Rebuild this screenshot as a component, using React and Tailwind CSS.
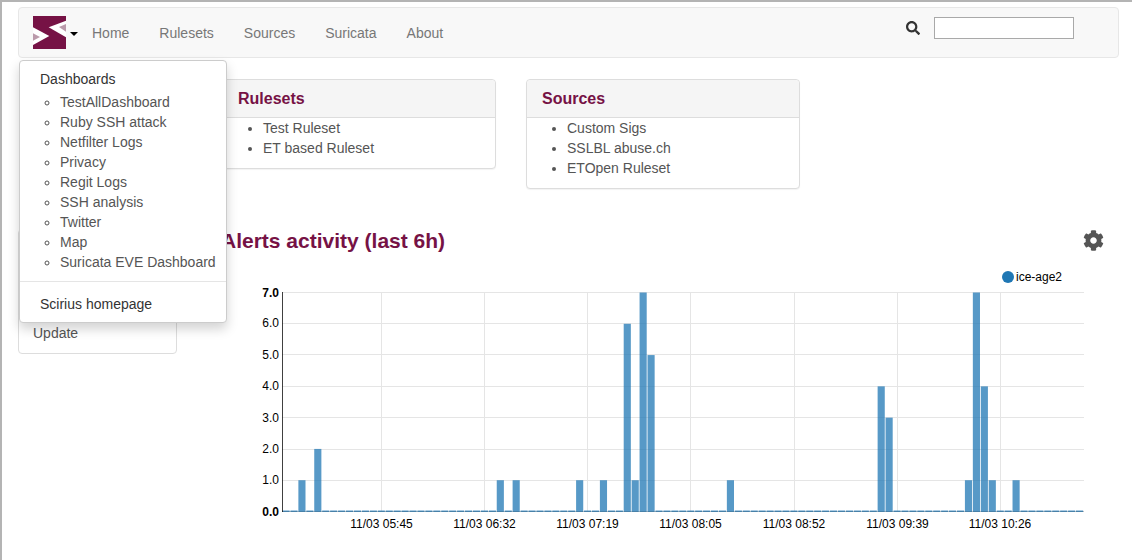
import React from "react";
import { FaCog, FaSearch } from "react-icons/fa";

const font = { fontFamily: '"Liberation Sans", Arial, sans-serif' };
const N = 101;
const STEP = 7.935;
const X0 = 282.1;
const vals = { 2: 1, 4: 2, 27: 1, 29: 1, 37: 1, 40: 1, 43: 6, 44: 1, 45: 7, 46: 5, 56: 1, 75: 4, 76: 3, 86: 1, 87: 7, 88: 4, 89: 1, 92: 1 };
const yTicks = [[7, 292.5, 296.5], [6, 323.5, 327], [5, 354.5, 359], [4, 386.5, 390], [3, 417.5, 422], [2, 449.5, 453], [1, 480.5, 484], [0, 511.5, 516]];
const xTicks = [[381.5, "11/03 05:45", 381.5], [484.5, "11/03 06:32", 484.5], [587.5, "11/03 07:19", 587.5], [690.5, "11/03 08:05", 690.5], [794.5, "11/03 08:52", 794], [897.5, "11/03 09:39", 897.5], [1000.5, "11/03 10:26", 1000]];

function Chart() {
  const yOf = (v) => 511.5 - v * (219 / 7);
  return (
    <svg width="1132" height="300" viewBox="0 260 1132 300" className="block" style={font}>
      {yTicks.map(([v, y]) => (
        <line key={v} x1="282" x2="1084" y1={y} y2={y} stroke="#e5e5e5" strokeWidth="1" />
      ))}
      {xTicks.map(([x]) => (
        <line key={x} x1={x} x2={x} y1="292" y2="512" stroke="#e5e5e5" strokeWidth="1" />
      ))}
      {Array.from({ length: N }).map((_, i) => {
        const v = vals[i] || 0;
        const x = X0 + i * STEP + 0.4;
        const y = v ? yOf(v) : 510.5;
        return <rect key={i} x={x} y={y} width={STEP - 0.8} height={v ? 512 - y : 1.5} fill="#1f77b4" fillOpacity="0.75" />;
      })}
      <line x1="282.5" x2="282.5" y1="292" y2="512" stroke="#000" strokeOpacity="0.75" />
      <line x1="282" x2="1084" y1="511.5" y2="511.5" stroke="#000" strokeOpacity="0.12" />
      {yTicks.map(([v, , ty]) => (
        <text key={v} x="279" y={ty} textAnchor="end" fontSize="12" fill="#000" fontWeight={v === 7 || v === 0 ? 700 : 400}>
          {v.toFixed(1)}
        </text>
      ))}
      {xTicks.map(([, t, lx]) => (
        <text key={t} x={lx} y="527.5" textAnchor="middle" fontSize="12" fill="#000">{t}</text>
      ))}
      <circle cx="1008" cy="277" r="6" fill="#1f77b4" />
      <text x="1016" y="281" fontSize="12" fill="#000">ice-age2</text>
    </svg>
  );
}

function Logo() {
  return (
    <svg width="33" height="33" viewBox="0 0 33 33" className="block">
      <rect width="33" height="33" fill="#761245" />
      <polygon points="33,4.7 15.7,11.3 33,21.3" fill="#fff" />
      <polygon points="33,8 26,11 33,15.7" fill="#bb9aab" />
      <polygon points="0,11.3 16.3,20 0,29" fill="#fff" />
      <polygon points="0,17.3 7,21 0,24.7" fill="#bb9aab" />
    </svg>
  );
}

function Panel({ title, items, className }) {
  return (
    <div className={`border border-[#ddd] rounded bg-white shadow-[0_1px_1px_rgba(0,0,0,0.05)] ${className}`}>
      <div className="h-[38px] px-[15px] flex items-center bg-[#f5f5f5] border-b border-[#ddd] rounded-t">
        <h3 className="text-[16px] font-bold text-[#761245] leading-none">{title}</h3>
      </div>
      <ul className="list-disc pl-[40px] pb-[10px] text-[14px] leading-[20px] text-[#555]">
        {items.map((t) => <li key={t}>{t}</li>)}
      </ul>
    </div>
  );
}

export default function App() {
  const dash = ["TestAllDashboard", "Ruby SSH attack", "Netfilter Logs", "Privacy", "Regit Logs", "SSH analysis", "Twitter", "Map", "Suricata EVE Dashboard"];
  return (
    <div className="relative w-[1132px] h-[560px] overflow-hidden bg-white border-t-2 border-l-2 border-[#b4b4b4]" style={font}>
      <div className="px-4 pt-[5px]">
        <nav className="h-[51px] flex items-center bg-[#f8f8f8] border border-[#e7e7e7] rounded w-[1101px]">
          <div className="pl-[14px] flex items-center">
            <Logo />
            <span className="ml-[4px] mt-[3px] w-0 h-0 border-x-[4px] border-x-transparent border-t-[4px] border-t-black" />
          </div>
          <div className="flex gap-[30px] ml-[14px] text-[14px] text-[#777] mt-[1px]">
            <span>Home</span><span>Rulesets</span><span>Sources</span><span>Suricata</span><span>About</span>
          </div>
          <div className="ml-auto mr-[44px] -mt-[9px] flex items-center gap-[14px]">
            <FaSearch className="text-[14px] text-[#333]" />
            <input className="w-[140px] h-[22px] border border-[#a9a9a9] bg-white" />
          </div>
        </nav>
        <div className="flex mt-[21px]">
          <aside className="w-[159px] shrink-0 mt-[150px] h-[125px] border border-[#ddd] rounded flex flex-col justify-end text-[14px] text-[#555] pl-[14px] pb-[10px] leading-[20px]">
            <span>Update</span>
          </aside>
          <main className="ml-[45px] flex-1">
            <div className="flex items-start gap-[30px]">
              <Panel title="Rulesets" items={["Test Ruleset", "ET based Ruleset"]} className="w-[274px] h-[90px]" />
              <Panel title="Sources" items={["Custom Sigs", "SSLBL abuse.ch", "ETOpen Ruleset"]} className="w-[274px] h-[110px]" />
            </div>
          </main>
        </div>
      </div>

      <h2 className="absolute left-[219px] top-[227px] text-[21px] leading-[24px] font-bold text-[#761245]">Alerts activity (last 6h)</h2>
      <FaCog className="absolute left-[1081px] top-[228px] text-[21px] text-[#555]" />
      <div className="absolute left-[-2px] top-[258px]"><Chart /></div>

      <div className="absolute left-[17px] top-[58px] w-[208px] h-[263px] bg-white border border-[#ccc] rounded shadow-[0_6px_12px_rgba(0,0,0,0.175)] text-[14px]">
        <div className="pl-[20px] pt-[8px] leading-[20px] text-[#333]">Dashboards</div>
        <ul className="list-[circle] pl-[40px] leading-[20px] text-[#555] mt-[3px] whitespace-nowrap">
          {dash.map((t) => <li key={t}>{t}</li>)}
        </ul>
        <div className="h-px bg-[#e5e5e5] mt-[9px]" />
        <div className="pl-[20px] pt-[12px] leading-[20px] text-[#333]">Scirius homepage</div>
      </div>
    </div>
  );
}
